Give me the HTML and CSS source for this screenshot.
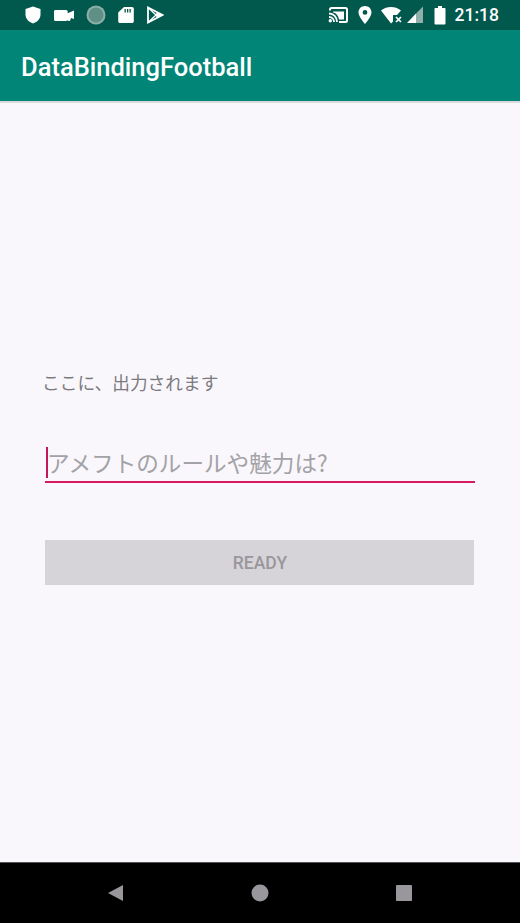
FILE: index.html
```html
<!DOCTYPE html>
<html lang="ja">
<head>
<meta charset="utf-8">
<title>DataBindingFootball</title>
<link rel="stylesheet" href="styles.css">
</head>
<body>
<div class="screen">
  <header class="status">
    <div class="status-left">
      <svg class="ic" viewBox="0 0 18 20" width="18" height="20"><path fill="#fff" d="M9 1.500 16.500 4v5.500c0 4.300-3.200 7.500-7.500 9-4.300-1.500-7.500-4.700-7.500-9V4z"/></svg>
      <svg class="ic" viewBox="0 0 22 20" width="22" height="20"><path fill="#fff" d="M1 6.500C1 5.500 1.800 5 2.500 5H13c1 0 1.700.8 1.700 1.700v1.500L21 5.500v8.500l-3-1-1 3-3-.5-1 .5H2.500C1.700 16 1 15.300 1 14.500z"/></svg>
      <svg class="ic" viewBox="0 0 20 20" width="20" height="20"><circle cx="10" cy="10" r="9.500" fill="#8fb0aa"/><circle cx="10" cy="10" r="7.500" fill="#5f9088"/></svg>
      <svg class="ic" viewBox="0 0 18 20" width="18" height="20"><path fill="#fff" d="M7 2h8c1 0 1.800.8 1.800 1.800v12.400c0 1-.8 1.800-1.800 1.800H3c-1 0-1.800-.8-1.800-1.800V7.500z"/><path fill="#01594d" d="M7.500 4h1.300v3.500H7.500zM10 4h1.300v3.500H10zM12.500 4h1.300v3.500h-1.300z"/></svg>
      <svg class="ic" viewBox="0 0 18 20" width="18" height="20"><path fill="none" stroke="#fff" stroke-width="1.800" d="M2 2.500v15L16.500 10z"/><path fill="none" stroke="#fff" stroke-width="1.300" d="M2 2.500 10 10l-8 7.500"/><path fill="#fff" d="M11 7.500 16.500 10 11 12.500 9 10z"/></svg>
    </div>
    <div class="status-right">
      <svg class="ic" viewBox="0 0 22 20" width="22" height="20"><path fill="none" stroke="#fff" stroke-width="2" d="M3 5.500V4.500c0-1 .7-1.500 1.500-1.500h14c1 0 1.500.7 1.500 1.500v11c0 1-.7 1.500-1.500 1.500H12"/><path fill="#fff" d="M6 6.500h11v8h-5C11.500 11 9.500 8 6 7.500z"/><path fill="none" stroke="#fff" stroke-width="1.800" d="M2 8.500c4.500 0 8 3.700 8 8.500M2 12c2.800 0 5 2.200 5 5"/><circle cx="3.300" cy="15.800" r="1.700" fill="#fff"/></svg>
      <svg class="ic pin" viewBox="0 0 16 20" width="16" height="20"><path fill="#fff" fill-rule="evenodd" d="M8 1c3.700 0 6.500 2.800 6.500 6.400C14.500 11.500 8 19 8 19S1.500 11.500 1.500 7.400C1.500 3.800 4.300 1 8 1zm0 4a2.400 2.400 0 1 0 0 4.800A2.400 2.400 0 0 0 8 5z"/></svg>
      <svg class="ic wifi" viewBox="0 0 24 20" width="24" height="20"><path fill="#fff" d="M1 5.500C4 3 7.500 2 11 2s7 1 10 3.500L17 10h-4v6.500l-2 2z"/><path stroke="#fff" stroke-width="1.700" d="m16 12 5 5m0-5-5 5"/></svg>
      <svg class="ic signal" viewBox="0 0 18 20" width="18" height="20"><path fill="#fff" d="M1 18 10 8.500V18z"/><path fill="#8fb0aa" d="m10 8.500 7-7V18h-7z"/></svg>
      <svg class="ic batt" viewBox="0 0 12 20" width="12" height="20"><path fill="#fff" d="M4 1h4v2h2.500c.5 0 1 .4 1 1v14.500c0 .5-.5 1-1 1h-9c-.5 0-1-.5-1-1V4c0-.6.5-1 1-1H4z"/></svg>
      <span class="clock">21:18</span>
    </div>
  </header>
  <div class="appbar">DataBindingFootball</div>
  <main class="content">
    <p class="output">ここに、出力されます</p>
    <div class="field">
      <span class="caret"></span>
      <span class="placeholder">アメフトのルールや魅力は?</span>
    </div>
    <button class="ready" type="button" disabled>READY</button>
  </main>
  <nav class="navbar">
    <svg viewBox="0 0 18 18" width="18" height="18"><path fill="#99979b" d="M16 1v16L1 9z"/></svg>
    <svg viewBox="0 0 18 18" width="18" height="18"><circle cx="9" cy="9" r="8.500" fill="#99979b"/></svg>
    <svg viewBox="0 0 18 18" width="18" height="18"><rect x="1" y="1" width="16" height="16" rx="1" fill="#99979b"/></svg>
  </nav>
</div>
</body>
</html>
```
FILE: styles.css
```css
* { box-sizing: border-box; }
html, body { margin: 0; padding: 0; }
body { font-family: Roboto, "Noto Sans CJK JP", sans-serif; }
.screen { width: 520px; height: 923px; display: flex; flex-direction: column; overflow: hidden; background: #f9f7fb; }
.status { height: 30px; flex: none; background: #01594d; display: flex; justify-content: space-between; align-items: center; padding: 0 21px 0 24px; }
.status-left { display: flex; align-items: center; gap: 11px; }
.status-right { display: flex; align-items: center; gap: 7px; }
.ic { display: block; }
.pin { margin-left: 1px; }
.signal { margin-left: -5px; }
.batt { margin-left: 3px; }
.clock { color: #fff; font-size: 17.500px; font-weight: 500; margin-left: 2px; }
.appbar { height: 73px; flex: none; background: #008577; color: #fff; font-size: 25.500px; font-weight: 500; padding: 3px 21px 0; display: flex; align-items: center; border-bottom: 2px solid #d9dadb; }
.content { flex: 1; display: flex; flex-direction: column; padding: 267px 45px 0; }
.output { margin: 0 0 0 -3px; font-size: 17.700px; line-height: 24px; color: #7b7a7e; font-family: "Noto Sans CJK JP", sans-serif; }
.field { margin-top: 52px; height: 37px; border-bottom: 2px solid #d81b60; display: flex; align-items: flex-start; }
.caret { width: 2px; height: 31px; margin: 1px 0 0 1px; background: #c2185b; flex: none; }
.placeholder { font-family: "Noto Sans CJK JP", sans-serif; font-size: 22.600px; line-height: 32px; color: #a3a2a6; white-space: nowrap; margin: 1px 0 0 -1px; }
.ready { margin-top: 57px; height: 45px; width: 429px; border: 0; padding: 0 0 0 1px; background: #d6d4d8; color: #99979b; font: 500 17.500px Roboto, sans-serif; }
.navbar { height: 61px; flex: none; background: #000; border-top: 1px solid #555; display: flex; justify-content: space-between; align-items: center; padding: 0 107px; }
.navbar svg { display: block; }
```
